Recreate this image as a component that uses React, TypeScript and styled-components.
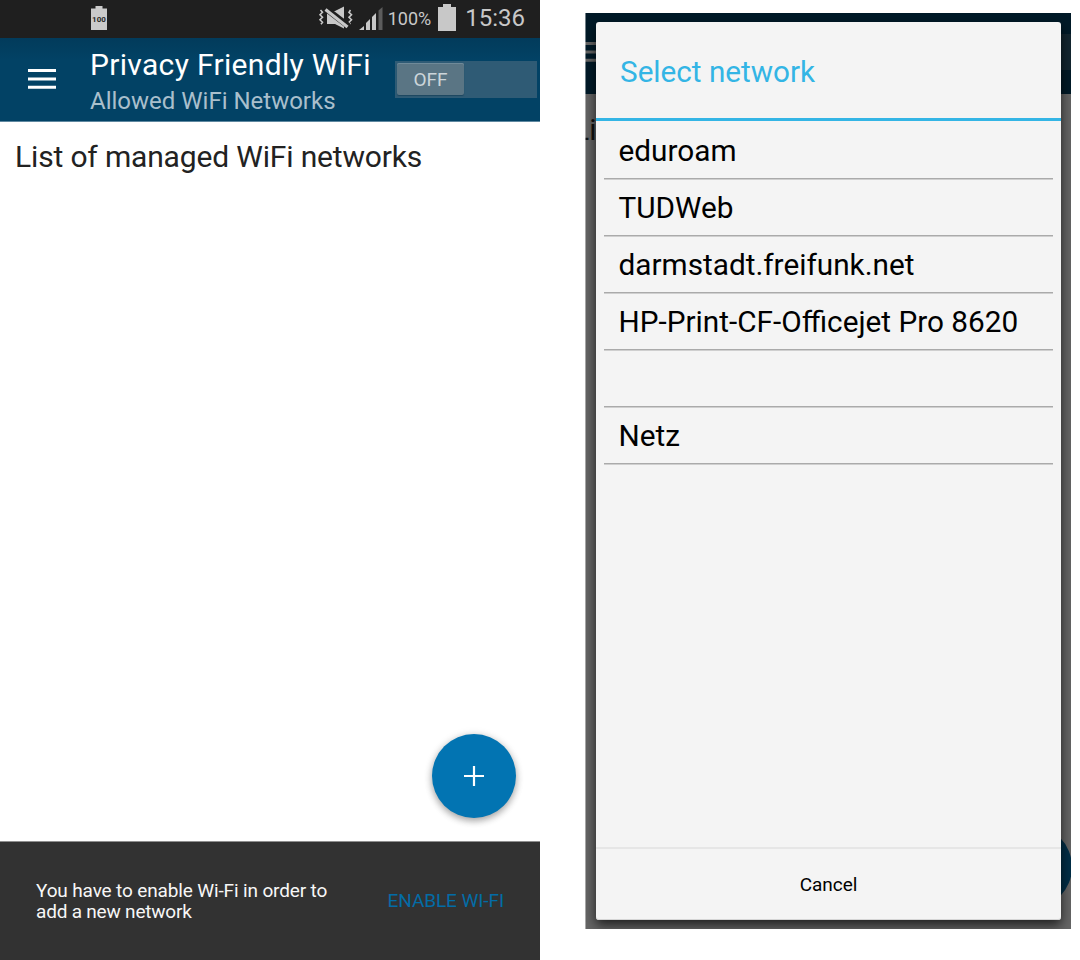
import React from 'react';
import styled, { createGlobalStyle } from 'styled-components';

const GlobalStyle = createGlobalStyle`
  * { box-sizing: border-box; }
  body { margin: 0; background: #fff; font-family: Roboto, sans-serif; overflow: hidden; }
  button { font: inherit; border: 0; background: none; padding: 0; }
`;

const Page = styled.main`
  width: 1080px;
  height: 960px;
  display: flex;
  align-items: flex-start;
  gap: 45px;
  overflow: hidden;
`;

const Phone = styled.section`
  width: 540px;
  height: 960px;
  flex: none;
  display: flex;
  flex-direction: column;
`;

const Text = styled.span<{ $size: number; $line: number; $color: string; $spacing?: number }>`
  display: block;
  white-space: nowrap;
  font-size: ${(p) => p.$size}px;
  line-height: ${(p) => p.$line}px;
  color: ${(p) => p.$color};
  letter-spacing: ${(p) => (p.$spacing ? `${p.$spacing}px` : 'normal')};
`;

const StatusBar = styled.header`
  height: 38px;
  flex: none;
  background: #1f1f1f;
  display: flex;
  align-items: flex-start;
  padding: 0 15px 0 91px;
`;

const StatusIcons = styled.div`
  margin-left: auto;
  display: flex;
  align-items: flex-start;
`;

const StatusLabel = styled(Text)`
  padding-top: 1px;
`;

const BatterySlot = styled.div`
  display: flex;
  margin: 0 9px 0 7px;
`;

const SignalSlot = styled.div`
  display: flex;
  margin: 0 5px;
`;

const AppBar = styled.div`
  height: 84px;
  flex: none;
  background: linear-gradient(#023b5b, #024265 22px);
  border-bottom: 1px solid #5f88a0;
  display: flex;
  align-items: flex-start;
  padding: 0 3px 0 28px;
`;

const MenuIcon = styled.svg`
  flex: none;
  margin-top: 31px;
`;

const Titles = styled.div`
  padding: 9px 0 0 34px;
  flex: 1;
`;

const Switch = styled.div`
  width: 142px;
  height: 37px;
  margin-top: 23px;
  flex: none;
  padding: 2px;
  background: #2f5b75;
`;

const Thumb = styled.button`
  display: flex;
  justify-content: center;
  width: 67px;
  height: 32px;
  border-radius: 2px;
  background: #5a7584;
  box-shadow: inset 0 1px #6f8a99, 0 1px 1px #1d4660;
`;

const Content = styled.div`
  flex: 1;
  display: flex;
  flex-direction: column;
  justify-content: space-between;
  padding: 17px 24px 23.5px 15px;
`;

const Fab = styled.button`
  align-self: flex-end;
  width: 84px;
  height: 84px;
  border-radius: 50%;
  background: #0274b2;
  display: flex;
  align-items: center;
  justify-content: center;
  box-shadow: 0 3px 7px rgba(0, 0, 0, 0.3), 0 1px 10px rgba(0, 0, 0, 0.12);
`;

const Snackbar = styled.footer`
  height: 119px;
  flex: none;
  background: #323232;
  border-top: 1px solid #8f8f8f;
  display: flex;
  align-items: center;
  justify-content: space-between;
  padding: 0 36px;
`;

const DialogScreen = styled.section`
  position: relative;
  width: 486px;
  height: 916px;
  margin-top: 13px;
  flex: none;
  background: #656565;
  overflow: hidden;
`;

const LeftEdge = styled.div`
  position: absolute;
  inset: 0 auto 0 0;
  width: 1px;
  background: rgba(255, 255, 255, 0.45);
`;

const DimmedBar = styled.div`
  height: 81px;
  background: #011a28;
  display: flex;
  justify-content: space-between;
`;

const DimmedMenu = styled.div`
  margin-left: -17px;
  margin-top: -2px;
`;

const DimmedSwitch = styled.div`
  width: 40px;
  height: 36px;
  margin-top: 21px;
  background: #132630;
`;

const DimmedHeading = styled.div`
  margin-left: -12px;
  padding-top: 18px;
`;

const DimmedFab = styled.div`
  position: absolute;
  left: 403px;
  top: 812px;
  width: 84px;
  height: 84px;
  border-radius: 50%;
  background: #012e47;
`;

const Dialog = styled.div`
  position: absolute;
  left: 11px;
  top: 9px;
  width: 465px;
  height: 898px;
  border-radius: 3px;
  background: #f4f4f4;
  box-shadow: 0 5px 12px rgba(0, 0, 0, 0.7), inset 0 -1px #d5d5d5;
  display: flex;
  flex-direction: column;
`;

const DialogTitle = styled.div`
  height: 99px;
  flex: none;
  padding: 32px 0 0 24px;
  border-bottom: 3px solid #33b5e5;
`;

const NetworkList = styled.ul`
  list-style: none;
  margin: 0;
  padding: 2px 8px 0;
  flex: 1;
`;

const Network = styled.li`
  height: 57px;
  padding: 10px 0 0 14.5px;
  background: linear-gradient(#aaa, #aaa) 0 55px / 100% 1px no-repeat;
  border-bottom: 1px solid #cfcfcf;
`;

const DialogFooter = styled.button`
  height: 73px;
  flex: none;
  border-top: 2px solid #e6e6e6;
  display: flex;
  align-items: center;
  justify-content: center;
`;

const networks = ['eduroam', 'TUDWeb', 'darmstadt.freifunk.net', 'HP-Print-CF-Officejet Pro 8620', '', 'Netz'];

const BatteryBadge = () => (
  <svg width="16" height="31" viewBox="0 0 16 31">
    <path d="M4.500 6h7v2.500H16V30H0V8.500h4.500z" fill="#cacaca" />
    <text x="8" y="22" fontSize="8" fontWeight="700" fontFamily="Roboto, sans-serif" textAnchor="middle" fill="#292929">100</text>
  </svg>
);

const MutedIcon = () => (
  <svg width="36" height="31" viewBox="0 0 36 31">
    <path d="M2.500 10l2 2.300-2.500 2.500 2.500 2.500-2.500 2.500 2.500 2.500-1.500 2M32.500 10l-1.500 2.300 2.500 2.500-2.500 2.500 2.500 2.500-2.500 2.500 1.500 2" fill="none" stroke="#c8c8c8" strokeWidth="1.600" />
    <path d="M9 11h8l9-4.500v22L17 24H9z" fill="#c8c8c8" />
    <path d="M7 8l24 18.500" stroke="#1f1f1f" strokeWidth="6" />
    <path d="M7.500 9.500l22 17.500" stroke="#c8c8c8" strokeWidth="3.200" />
  </svg>
);

const SignalIcon = () => (
  <svg width="24" height="31" viewBox="0 0 24 31">
    <path d="M0 30l5-4v4zM7 30v-7l4-4v11zM13 30V17l4-4v17z" fill="#c8c8c8" />
    <path d="M19.500 30V10.500L23.500 7v23z" fill="#5c5c5c" />
  </svg>
);

const BatteryIcon = () => (
  <svg width="18" height="32" viewBox="0 0 18 32">
    <path d="M5 4h8v3h5v24H0V7h5z" fill="#c8c8c8" />
  </svg>
);

const Bars = ({ color }: { color: string }) => (
  <MenuIcon width="28" height="20" viewBox="0 0 28 20">
    <path d="M0 1.500h28M0 10h28M0 18.200h28" stroke={color} strokeWidth="2.900" />
  </MenuIcon>
);

export default function App() {
  return (
    <>
      <GlobalStyle />
      <Page>
        <Phone>
          <StatusBar>
            <BatteryBadge />
            <StatusIcons>
              <MutedIcon />
              <SignalSlot><SignalIcon /></SignalSlot>
              <StatusLabel $size={18} $line={35} $color="#c8c8c8">100%</StatusLabel>
              <BatterySlot><BatteryIcon /></BatterySlot>
              <StatusLabel $size={24} $line={35} $color="#c8c8c8">15:36</StatusLabel>
            </StatusIcons>
          </StatusBar>
          <AppBar>
            <Bars color="#fff" />
            <Titles>
              <Text $size={30} $line={36} $color="#fff" $spacing={0.32}>Privacy Friendly WiFi</Text>
              <Text $size={24} $line={37} $color="#a9bfcc">Allowed WiFi Networks</Text>
            </Titles>
            <Switch>
              <Thumb><Text $size={19} $line={34} $color="#ccd5da" $spacing={-0.1}>OFF</Text></Thumb>
            </Switch>
          </AppBar>
          <Content>
            <Text $size={30} $line={36} $color="#222" $spacing={-0.16}>List of managed WiFi networks</Text>
            <Fab aria-label="Add network">
              <svg width="20" height="20" viewBox="0 0 20 20">
                <path d="M0 10h20M10 0v20" stroke="#fff" strokeWidth="2.200" />
              </svg>
            </Fab>
          </Content>
          <Snackbar>
            <div>
              <Text $size={19} $line={21} $color="#f7f7f7" $spacing={-0.14}>You have to enable Wi-Fi in order to</Text>
              <Text $size={19} $line={21} $color="#f7f7f7" $spacing={-0.2}>add a new network</Text>
            </div>
            <button><Text $size={19} $line={22} $color="#036ca6" $spacing={-0.08}>ENABLE WI-FI</Text></button>
          </Snackbar>
        </Phone>
        <DialogScreen>
          <DimmedBar>
            <DimmedMenu><Bars color="#656565" /></DimmedMenu>
            <DimmedSwitch />
          </DimmedBar>
          <DimmedHeading>
            <Text $size={30} $line={36} $color="#111">Li</Text>
          </DimmedHeading>
          <DimmedFab />
          <LeftEdge />
          <Dialog>
            <DialogTitle><Text $size={29.7} $line={36} $color="#33b5e5">Select network</Text></DialogTitle>
            <NetworkList>
              {networks.map((name, i) => (
                <Network key={i}><Text $size={29.75} $line={36} $color="#000">{name}</Text></Network>
              ))}
            </NetworkList>
            <DialogFooter><Text $size={19} $line={22} $color="#000" $spacing={-0.05}>Cancel</Text></DialogFooter>
          </Dialog>
        </DialogScreen>
      </Page>
    </>
  );
}
